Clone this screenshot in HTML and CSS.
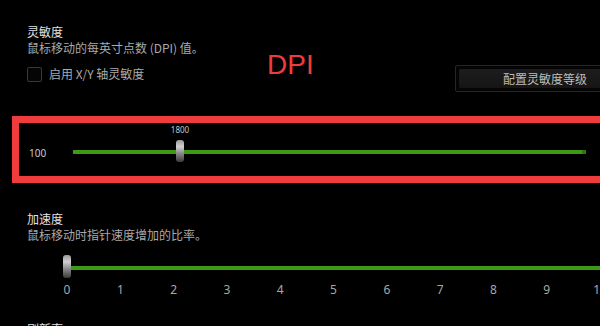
FILE: index.html
```html
<!DOCTYPE html>
<html lang="zh-CN">
<head>
<meta charset="utf-8">
<title>灵敏度</title>
<link rel="stylesheet" href="styles.css">
</head>
<body>
<div class="page">
  <div class="annot-dpi">DPI</div>

  <div class="sec-title">灵敏度</div>
  <div class="sec-sub">鼠标移动的每英寸点数 (DPI) 值。</div>

  <div class="opt-row">
    <label class="check">
      <span class="check-box"></span>
      <span class="check-label">启用 X/Y 轴灵敏度</span>
    </label>
    <div class="btn-outer"><div class="btn-inner">配置灵敏度等级</div></div>
  </div>

  <div class="red-box">
    <div class="dpi-min">100</div>
    <div class="dpi-slider">
      <div class="dpi-track"></div>
      <div class="dpi-end"></div>
      <div class="dpi-value">1800</div>
      <div class="thumb dpi-thumb"></div>
    </div>
  </div>

  <div class="sec-title accel-title">加速度</div>
  <div class="sec-sub">鼠标移动时指针速度增加的比率。</div>

  <div class="accel-slider">
    <div class="accel-track"></div>
    <div class="thumb accel-thumb"></div>
  </div>
  <div class="ticks">
    <span>0</span><span>1</span><span>2</span><span>3</span><span>4</span><span>5</span><span>6</span><span>7</span><span>8</span><span>9</span><span>10</span>
  </div>

  <div class="sec-title refresh-title">刷新率</div>
</div>
</body>
</html>
```

FILE: styles.css
```css
html, body {
  margin: 0;
  padding: 0;
  background: #000;
}
.page {
  position: relative;
  width: 600px;
  height: 326px;
  overflow: hidden;
  box-sizing: border-box;
  padding: 24px 0 0 27px;
  background: #000;
  font-family: "Noto Sans CJK SC", "Noto Sans", sans-serif;
  font-size: 12px;
  line-height: 16px;
}
.annot-dpi {
  position: absolute;
  left: 267px;
  top: 51px;
  font-family: "Liberation Sans", Arial, sans-serif;
  font-size: 28px;
  line-height: 28px;
  color: #f03c3c;
}
.sec-title {
  color: #e2e2e2;
}
.sec-sub {
  color: #a9a9a9;
}
.opt-row {
  display: flex;
  align-items: flex-start;
  margin-top: 9px;
}
.check {
  display: flex;
  align-items: center;
  margin-top: 1px;
}
.check-box {
  width: 13px;
  height: 13px;
  border: 1px solid #383838;
  border-radius: 2px;
  background: #050505;
}
.check-label {
  margin-left: 7px;
  color: #aaaaaa;
}
.btn-outer {
  margin-left: auto;
  margin-right: -35px;
  width: 180px;
  height: 27px;
  box-sizing: border-box;
  border: 1px solid #262626;
  border-radius: 2px;
  padding: 3px;
  background: #040404;
}
.btn-inner {
  height: 19px;
  line-height: 19px;
  border-radius: 2px;
  background: linear-gradient(#1d1d1d, #151515);
  color: #bdbdbd;
  text-align: center;
}
.red-box {
  display: flex;
  margin: 24px 0 0 -15px;
  width: 600px;
  height: 67px;
  box-sizing: border-box;
  border: 7px solid #f03c3c;
  padding: 17px 0 0 10px;
}
.dpi-min {
  width: 44px;
  padding-top: 7px;
  font-family: "Noto Sans", sans-serif;
  font-size: 10px;
  line-height: 12px;
  color: #c8c8c8;
}
.dpi-slider {
  position: relative;
  width: 513px;
  height: 22px;
  box-sizing: border-box;
  padding-top: 10px;
}
.dpi-track {
  height: 4px;
  background: #3d9a14;
}
.dpi-end {
  position: absolute;
  right: 0;
  top: 10px;
  width: 4px;
  height: 4px;
  background: #2f7a10;
}
.dpi-value {
  position: absolute;
  left: 87px;
  width: 40px;
  top: -15px;
  text-align: center;
  font-family: "Noto Sans", sans-serif;
  font-size: 8px;
  line-height: 10px;
  color: #c8c8c8;
}
.thumb {
  position: absolute;
  width: 8px;
  border-radius: 3px;
  background: linear-gradient(#9a9a9a, #cfcfcf 30%, #8a8a8a 60%, #3a3a3a);
}
.dpi-thumb {
  left: 103px;
  top: 0;
  height: 22px;
}
.accel-title {
  margin-top: 28px;
}
.accel-slider {
  position: relative;
  margin: 12px 0 0 36px;
  height: 23px;
  box-sizing: border-box;
  padding: 11px 0 0 8px;
}
.accel-track {
  height: 4px;
  background: #3d9a14;
}
.accel-thumb {
  left: 0;
  top: 0;
  height: 23px;
}
.ticks {
  display: grid;
  grid-template-columns: repeat(11, 53.3px);
  margin: 4px 0 0 13.4px;
  font-family: "Noto Sans", sans-serif;
  font-size: 12px;
  line-height: 16px;
  color: #a8a8a8;
}
.ticks span {
  text-align: center;
}
.refresh-title {
  margin-top: 23px;
}
```
